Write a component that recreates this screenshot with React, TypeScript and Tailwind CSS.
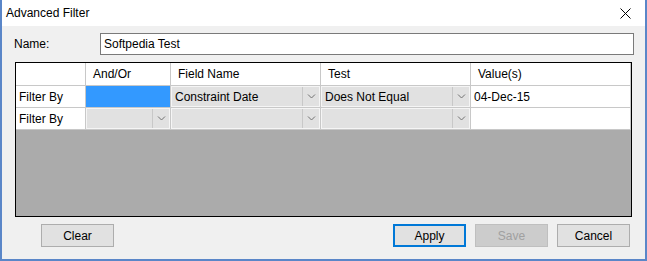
import React from 'react';

const font = { fontFamily: '"Liberation Sans", Arial, sans-serif' };

// Small chevron used by the combo cells
const Chevron: React.FC = () => (
  <svg width="9" height="5" viewBox="0 0 9 5" className="block">
    <path d="M1 0.5 L4.5 4 L8 0.5" fill="none" stroke="#707070" strokeWidth="1" />
  </svg>
);

interface ComboCellProps {
  width: string;
  value?: string;
}

const ComboCell: React.FC<ComboCellProps> = ({ width, value }) => (
  <div className={`${width} h-full shrink-0 border-r border-b border-[#c8c8c8] bg-[#f5f5f5] p-px`}>
    <div className="flex h-full bg-[#e1e1e1]">
      <div className="flex flex-1 items-center pl-[3px] text-[12px] text-black">{value}</div>
      <div className="flex w-[17px] items-center justify-center border-l border-[#c8c8c8]">
        <Chevron />
      </div>
    </div>
  </div>
);

const HeaderCell: React.FC<{ width: string; label?: string }> = ({ width, label }) => (
  <div className={`${width} flex h-full shrink-0 items-center border-r border-b border-[#c8c8c8] bg-white pl-[7px] text-[12px] text-black`}>
    {label}
  </div>
);

const Button: React.FC<{ label: string; variant?: 'default' | 'primary' | 'disabled' }> = ({
  label,
  variant = 'default',
}) => {
  const styles =
    variant === 'primary'
      ? 'border-2 border-[#0078d7] bg-[#e1e1e1] text-black'
      : variant === 'disabled'
        ? 'border border-[#bfbfbf] bg-[#cccccc] text-[#a0a0a0]'
        : 'border border-[#adadad] bg-[#e1e1e1] text-black';
  return (
    <div className={`flex h-[23px] w-[73px] items-center justify-center text-[12px] ${styles}`}>{label}</div>
  );
};

export default function App() {
  return (
    <div
      className="flex h-[261px] w-[647px] flex-col border-x-2 border-b-2 border-[#5a86c8] bg-[#f0f0f0]"
      style={font}
    >
      {/* Title bar */}
      <div className="flex h-[26px] shrink-0 items-center justify-between bg-white pl-[4px] pr-[14px]">
        <span className="text-[12px] text-black">Advanced Filter</span>
        <svg width="11" height="11" viewBox="0 0 11 11">
          <path d="M0.5 0.5 L10.5 10.5 M10.5 0.5 L0.5 10.5" stroke="#000" strokeWidth="1" />
        </svg>
      </div>

      {/* Name row */}
      <div className="mt-[7px] flex h-[22px] items-center">
        <span className="w-[98px] shrink-0 pl-[12px] text-[12px] text-black">Name:</span>
        <div className="flex h-[22px] w-[534px] items-center border border-[#7a7a7a] bg-white pl-[3px] text-[12px] text-black">
          Softpedia Test
        </div>
      </div>

      {/* Grid */}
      <div className="ml-[13px] mt-[7px] flex h-[155px] w-[617px] flex-col border border-black bg-[#ababab]">
        <div className="flex h-[23px] shrink-0">
          <HeaderCell width="w-[70px]" />
          <HeaderCell width="w-[85px]" label="And/Or" />
          <HeaderCell width="w-[150px]" label="Field Name" />
          <HeaderCell width="w-[150px]" label="Test" />
          <HeaderCell width="w-[160px]" label="Value(s)" />
        </div>
        <div className="flex h-[22px] shrink-0">
          <div className="flex w-[70px] shrink-0 items-center border-r border-b border-[#c8c8c8] bg-white pl-[3px] text-[12px] text-black">
            Filter By
          </div>
          <div className="w-[85px] shrink-0 border-r border-b border-[#c8c8c8] bg-[#3399ff]" />
          <ComboCell width="w-[150px]" value="Constraint Date" />
          <ComboCell width="w-[150px]" value="Does Not Equal" />
          <div className="flex w-[160px] shrink-0 items-center border-r border-b border-[#c8c8c8] bg-white pl-[3px] text-[12px] text-black">
            04-Dec-15
          </div>
        </div>
        <div className="flex h-[22px] shrink-0">
          <div className="flex w-[70px] shrink-0 items-center border-r border-b border-[#c8c8c8] bg-white pl-[3px] text-[12px] text-black">
            Filter By
          </div>
          <ComboCell width="w-[85px]" />
          <ComboCell width="w-[150px]" />
          <ComboCell width="w-[150px]" />
          <div className="w-[160px] shrink-0 border-r border-b border-[#c8c8c8] bg-white" />
        </div>
      </div>

      {/* Buttons */}
      <div className="mt-[7px] flex items-center pl-[39px] pr-[15px]">
        <Button label="Clear" />
        <div className="flex-1" />
        <div className="flex gap-[9px]">
          <Button label="Apply" variant="primary" />
          <Button label="Save" variant="disabled" />
          <Button label="Cancel" />
        </div>
      </div>
    </div>
  );
}
